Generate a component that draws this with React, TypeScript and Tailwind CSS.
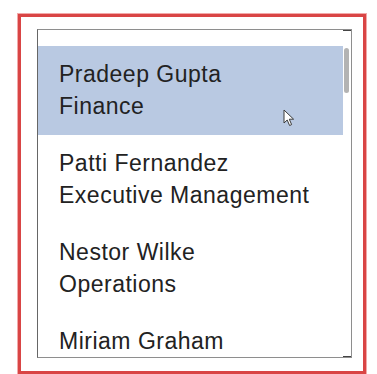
import React from "react";

const PEOPLE = [
  { name: "Pradeep Gupta", dept: "Finance" },
  { name: "Patti Fernandez", dept: "Executive Management" },
  { name: "Nestor Wilke", dept: "Operations" },
  { name: "Miriam Graham", dept: "" },
];

function Cursor() {
  return (
    <svg width="12" height="18" viewBox="0 0 12 18" className="absolute left-[245px] top-[63px]">
      <path d="M1 1 L1 14 L4.2 11 L6.6 16.5 L8.6 15.6 L6.3 10.2 L10.6 10.2 Z" fill="#ffffff" stroke="#3a3a3a" strokeWidth="1" strokeLinejoin="round" />
    </svg>
  );
}

export default function App() {
  return (
    <div className="w-[377px] h-[374px] overflow-hidden bg-white pl-[18px] pt-[14px] font-['Liberation_Sans',Arial,sans-serif]">
      <div className="w-[348px] border-[3px] border-[#d94545] shadow-[0_0_0_1px_#f2a9a9] pl-[16px] pt-[12px] pb-[13px]">
        <div className="w-[315px] h-[329px] border border-[#8e8e8e] border-l-[#666] bg-white flex overflow-hidden">
          <div className="w-[305px] pt-[16px] overflow-hidden">
            {PEOPLE.map((p, i) => (
              <div
                key={p.name}
                className={`relative h-[89px] pt-[12px] pl-[21px] text-[23px] leading-[32px] tracking-[0.5px] text-[#222] ${i === 0 ? "bg-[#b9c9e2]" : ""}`}
              >
                <div>{p.name}</div>
                {p.dept && <div>{p.dept}</div>}
                {i === 0 && <Cursor />}
              </div>
            ))}
          </div>
          <div className="w-[8px] flex flex-col">
            <div className="h-[1px] bg-[#444]" />
            <div className="flex-1">
              <div className="ml-[1px] mt-[17px] w-[5px] h-[45px] rounded-full bg-[#b3b3b3]" />
            </div>
            <div className="h-[1px] bg-[#444]" />
          </div>
        </div>
      </div>
    </div>
  );
}
